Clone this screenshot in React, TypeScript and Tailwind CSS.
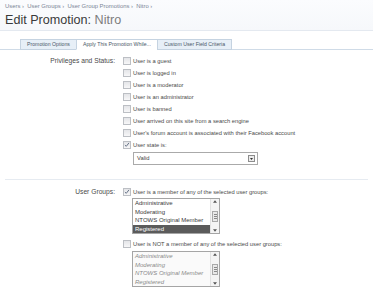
import React from 'react';

const sans = "font-['Liberation_Sans',Arial,sans-serif]";

function Box({ checked }: { checked?: boolean }) {
  return (
    <span className="relative inline-block w-[8px] h-[8px] shrink-0 border border-[#bcbfc4] bg-linear-to-b from-[#e4e5e8] to-[#f7f7f8]">
      {checked && (
        <svg viewBox="0 0 8 8" className="absolute left-0 top-0 w-[6px] h-[6px]">
          <path d="M1.2 4 L3 5.8 L6.6 1.2" fill="none" stroke="#4b5a72" strokeWidth="1.1" />
        </svg>
      )}
    </span>
  );
}

function Opt({ label, checked }: { label: string; checked?: boolean }) {
  return (
    <div className="flex items-center h-[12px] gap-[2px]">
      <Box checked={checked} />
      <span className="text-[5.75px] text-[#4a4a4a] whitespace-nowrap">{label}</span>
    </div>
  );
}

function Scroll() {
  return (
    <div className="w-[9px] flex flex-col items-center justify-between border-l border-[#e2e2e2] bg-[#f4f4f4] py-[1px]">
      <svg viewBox="0 0 6 4" className="w-[4px] h-[3px]"><path d="M0 4 L3 0 L6 4Z" fill="#555" /></svg>
      <div className="w-[6px] h-[11px] border border-[#a8a8a8] bg-[#e9e9e9] flex flex-col items-center justify-center gap-[1px]">
        <div className="w-[3px] h-px bg-[#888]" />
        <div className="w-[3px] h-px bg-[#888]" />
        <div className="w-[3px] h-px bg-[#888]" />
      </div>
      <svg viewBox="0 0 6 4" className="w-[4px] h-[3px]"><path d="M0 0 L3 4 L6 0Z" fill="#555" /></svg>
    </div>
  );
}

const groups = ['Administrative', 'Moderating', 'NTOWS Original Member', 'Registered'];

function ListBox({ disabled }: { disabled?: boolean }) {
  return (
    <div className={`flex w-[88px] h-[36px] border border-[#a5a5a5] ${disabled ? 'bg-[#fafafa]' : 'bg-white'}`}>
      <div className="flex-1 flex flex-col">
        {groups.map((g, i) => {
          const sel = !disabled && i === 3;
          return (
            <div
              key={g}
              className={`h-[8.5px] leading-[8.5px] pl-[2px] text-[6px] whitespace-nowrap ${
                sel ? 'bg-[#5b5b5b] text-white' : disabled ? 'italic text-[#8a8a8a]' : 'text-[#3a3a3a]'
              }`}
            >
              {g}
            </div>
          );
        })}
      </div>
      <Scroll />
    </div>
  );
}

export default function App() {
  const tabs = ['Promotion Options', 'Apply This Promotion While...', 'Custom User Field Criteria'];
  return (
    <div className={`w-[373px] h-[300px] overflow-hidden bg-white ${sans}`}>
      <div className="h-[31px] bg-linear-to-b from-[#fbfcfe] to-[#f6f8fb] border-b border-[#e4e9f0] px-[5px]">
        <div className="pt-[3px] text-[5.9px] leading-[7px] text-[#7a8596] whitespace-nowrap">
          Users ›&nbsp;&nbsp;User Groups ›&nbsp;&nbsp;User Group Promotions ›&nbsp;&nbsp;Nitro ›
        </div>
        <h1 className="mt-[3px] text-[12.6px] leading-[15px] text-[#3a3a3a]">
          Edit Promotion: <span className="text-[#7d7d7d]">Nitro</span>
        </h1>
      </div>

      <div className="mt-[8px] flex items-end pl-[20px] border-b border-[#cfdbe7] h-[11px]">
        {tabs.map((t, i) => (
          <div
            key={t}
            className={`h-[11px] -mb-px px-[6px] flex items-center text-[5.2px] text-[#4a5868] border border-[#c5d3e1] whitespace-nowrap ${
              i === 1 ? 'bg-white border-b-white' : 'bg-[#e7eff7]'
            } ${i > 0 ? '-ml-px' : ''}`}
          >
            {t}
          </div>
        ))}
      </div>

      <div className="mt-[5px] flex">
        <div className="w-[115px] text-right text-[6.7px] leading-[12px] text-[#4a4a4a]">Privileges and Status:</div>
        <div className="ml-[8px] flex flex-col">
          <Opt label="User is a guest" />
          <Opt label="User is logged in" />
          <Opt label="User is a moderator" />
          <Opt label="User is an administrator" />
          <Opt label="User is banned" />
          <Opt label="User arrived on this site from a search engine" />
          <Opt label="User's forum account is associated with their Facebook account" />
          <Opt label="User state is:" checked />
          <div className="mt-px ml-[10px] w-[125px] h-[13px] border border-[#aaaaaa] bg-white flex items-center justify-between pl-[3px] pr-[2px]">
            <span className="text-[5.8px] text-[#444]">Valid</span>
            <span className="w-[7px] h-[7px] border border-[#8d8d8d] bg-[#ececec] flex items-center justify-center">
              <svg viewBox="0 0 6 4" className="w-[3px] h-[2px]"><path d="M0 0 L3 4 L6 0Z" fill="#333" /></svg>
            </span>
          </div>
        </div>
      </div>

      <div className="mt-[14px] mx-[5px] border-t border-[#e6ebf1]" />

      <div className="mt-[6px] flex">
        <div className="w-[115px] text-right text-[6.7px] leading-[12px] text-[#4a4a4a]">User Groups:</div>
        <div className="ml-[8px] flex flex-col">
          <Opt label="User is a member of any of the selected user groups:" checked />
          <div className="ml-[9px]">
            <ListBox />
          </div>
          <div className="mt-[4px]">
            <Opt label="User is NOT a member of any of the selected user groups:" />
          </div>
          <div className="ml-[9px] mt-px">
            <ListBox disabled />
          </div>
        </div>
      </div>
    </div>
  );
}
